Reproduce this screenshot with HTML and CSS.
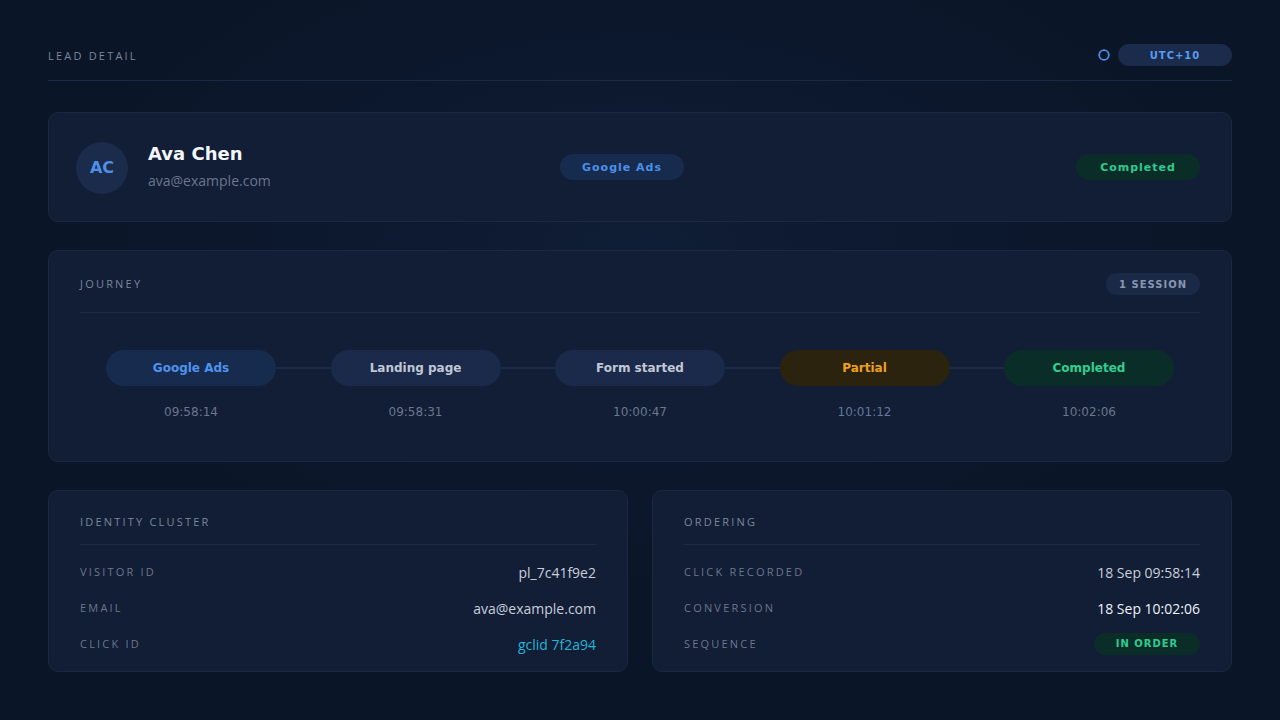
FILE: index.html
```html
<!DOCTYPE html>
<html lang="en">
<head>
<meta charset="utf-8">
<title>Lead detail</title>
<link rel="stylesheet" href="styles.css">
</head>
<body>
<div class="page">
  <header class="topbar">
    <div class="eyebrow">LEAD DETAIL</div>
    <div class="topbar-right">
      <svg class="ring" width="12" height="12" viewBox="0 0 12 12"><circle cx="6" cy="6" r="4.8" fill="none" stroke="#4a8ee8" stroke-width="1.8"/></svg>
      <span class="pill pill-tz">UTC+10</span>
    </div>
  </header>

  <section class="card lead">
    <div class="lead-id">
      <div class="avatar">AC</div>
      <div class="lead-text">
        <div class="lead-name">Ava Chen</div>
        <div class="lead-email">ava@example.com</div>
      </div>
    </div>
    <div class="lead-mid"><span class="pill pill-source">Google Ads</span></div>
    <div class="lead-right"><span class="pill pill-done">Completed</span></div>
  </section>

  <section class="card journey">
    <div class="card-head head-pill">
      <div class="eyebrow">JOURNEY</div>
      <span class="pill pill-session">1 SESSION</span>
    </div>
    <div class="steps">
      <div class="step">
        <div class="step-pill sp-source">Google Ads</div>
        <div class="step-time">09:58:14</div>
      </div>
      <div class="connector"></div>
      <div class="step">
        <div class="step-pill sp-neutral">Landing page</div>
        <div class="step-time">09:58:31</div>
      </div>
      <div class="connector"></div>
      <div class="step">
        <div class="step-pill sp-neutral">Form started</div>
        <div class="step-time">10:00:47</div>
      </div>
      <div class="connector"></div>
      <div class="step">
        <div class="step-pill sp-partial">Partial</div>
        <div class="step-time time-blue">10:01:12</div>
      </div>
      <div class="connector"></div>
      <div class="step">
        <div class="step-pill sp-done">Completed</div>
        <div class="step-time">10:02:06</div>
      </div>
    </div>
  </section>

  <div class="split">
    <section class="card detail">
      <div class="card-head head-text">
        <div class="eyebrow">IDENTITY CLUSTER</div>
      </div>
      <div class="rows">
        <div class="row"><span class="row-label">VISITOR ID</span><span class="row-value">pl_7c41f9e2</span></div>
        <div class="row"><span class="row-label">EMAIL</span><span class="row-value">ava@example.com</span></div>
        <div class="row"><span class="row-label">CLICK ID</span><span class="row-value value-cyan">gclid 7f2a94</span></div>
      </div>
    </section>
    <section class="card detail">
      <div class="card-head head-text">
        <div class="eyebrow">ORDERING</div>
      </div>
      <div class="rows">
        <div class="row"><span class="row-label">CLICK RECORDED</span><span class="row-value">18 Sep 09:58:14</span></div>
        <div class="row"><span class="row-label">CONVERSION</span><span class="row-value value-bright">18 Sep 10:02:06</span></div>
        <div class="row"><span class="row-label">SEQUENCE</span><span class="pill pill-order">IN ORDER</span></div>
      </div>
    </section>
  </div>
</div>
</body>
</html>
```

FILE: styles.css
```css
* { box-sizing: border-box; }

html, body {
  margin: 0;
  height: 100%;
}

body {
  font-family: "DejaVu Sans", Verdana, sans-serif;
  color: #c8cfdb;
  background-color: #0a1527;
  background-image: radial-gradient(ellipse 620px 360px at 640px 250px, #0f1d36 0%, #0c182d 55%, #0a1527 100%);
  min-height: 720px;
}

.page {
  padding: 32px 48px 0;
}

.eyebrow {
  font-family: "Open Sans", "Noto Sans", sans-serif;
  font-size: 11px;
  letter-spacing: 0.2em;
  color: #7b879b;
  line-height: 16px;
}

.topbar {
  height: 49px;
  display: flex;
  align-items: center;
  justify-content: space-between;
  border-bottom: 1px solid #1a2946;
}

.topbar-right {
  display: flex;
  align-items: center;
  gap: 8px;
  margin-top: -2px;
}

.ring { display: block; }

.pill {
  display: inline-flex;
  align-items: center;
  justify-content: center;
  border-radius: 999px;
  font-weight: bold;
  font-size: 11px;
  white-space: nowrap;
}

.pill-tz {
  width: 114px;
  height: 22px;
  background: #1a2b4c;
  color: #5a9cf0;
  font-size: 10px;
  letter-spacing: 1px;
}

.card {
  background: #121d36;
  border: 1px solid #1b2843;
  border-radius: 10px;
}

.lead {
  margin-top: 31px;
  height: 110px;
  display: grid;
  grid-template-columns: 484px auto 1fr;
  align-items: center;
  padding: 0 31px 0 27px;
}

.lead-id {
  display: flex;
  align-items: center;
  gap: 20px;
}

.avatar {
  width: 52px;
  height: 52px;
  border-radius: 50%;
  background: #1b2b4b;
  color: #4f8fe6;
  font-weight: bold;
  font-size: 16px;
  display: flex;
  align-items: center;
  justify-content: center;
  margin-top: 1px;
}

.lead-text {
  display: flex;
  flex-direction: column;
  gap: 7px;
  margin-top: -1px;
}

.lead-name {
  font-size: 18px;
  font-weight: bold;
  color: #f2f5fa;
  line-height: 22px;
}

.lead-email {
  font-family: "Open Sans", "Noto Sans", sans-serif;
  font-size: 14px;
  color: #6b778c;
  line-height: 18px;
}

.pill-source {
  width: 124px;
  height: 26px;
  background: #172b4f;
  color: #4c8fe8;
  letter-spacing: 0.09em;
}

.lead-right {
  display: flex;
  justify-content: flex-end;
}

.pill-done {
  width: 124px;
  height: 26px;
  background: #0b2d28;
  color: #2ecc8f;
  letter-spacing: 0.09em;
}

.journey {
  margin-top: 28px;
  height: 212px;
  padding: 22px 31px 0;
}

.card-head {
  display: flex;
  align-items: center;
  justify-content: space-between;
  border-bottom: 1px solid #1b2a49;
}

.head-pill {
  height: 40px;
  padding-bottom: 17px;
}

.pill-session {
  width: 94px;
  height: 22px;
  background: #1a2946;
  color: #8897b0;
  font-size: 10px;
  letter-spacing: 1px;
}

.steps {
  display: flex;
  align-items: flex-start;
  margin-top: 37px;
  padding: 0 26px;
}

.step {
  width: 170px;
  flex: none;
  display: flex;
  flex-direction: column;
  align-items: center;
}

.step-pill {
  width: 170px;
  height: 36px;
  border-radius: 18px;
  display: flex;
  align-items: center;
  justify-content: center;
  font-size: 12px;
  font-weight: bold;
}

.sp-source { background: #172b4f; color: #4f93ec; }
.sp-neutral { background: #1b2a4a; color: #c0c8d6; }
.sp-partial { background: #2c230e; color: #f0a020; }
.sp-done { background: #0b2d28; color: #2fcf90; }

.connector {
  flex: 1;
  height: 2px;
  margin-top: 17px;
  background: #1c2a48;
}

.step-time {
  margin-top: 19px;
  font-size: 12px;
  line-height: 14px;
  color: #6b778c;
}

.time-blue { color: #62789a; }

.split {
  margin-top: 28px;
  display: grid;
  grid-template-columns: 1fr 1fr;
  gap: 24px;
}

.detail {
  height: 182px;
  padding: 23px 31px 0;
}

.head-text {
  height: 31px;
  padding-bottom: 14px;
}

.rows {
  margin-top: 9px;
}

.row {
  height: 36px;
  display: flex;
  align-items: center;
  justify-content: space-between;
}

.row-label {
  font-family: "Open Sans", "Noto Sans", sans-serif;
  font-size: 11px;
  line-height: 16px;
  letter-spacing: 0.2em;
  color: #6b778c;
}

.row-value {
  font-family: "Open Sans", "Noto Sans", sans-serif;
  font-size: 14px;
  line-height: 18px;
  padding-top: 2px;
  color: #c8cfdb;
}

.value-cyan { color: #22b5d8; }
.value-bright { color: #eef2f8; }

.pill-order {
  width: 106px;
  height: 22px;
  background: #0b2d28;
  color: #2ecc8f;
  font-size: 10px;
  letter-spacing: 1px;
  margin-top: -1px;
}
```
